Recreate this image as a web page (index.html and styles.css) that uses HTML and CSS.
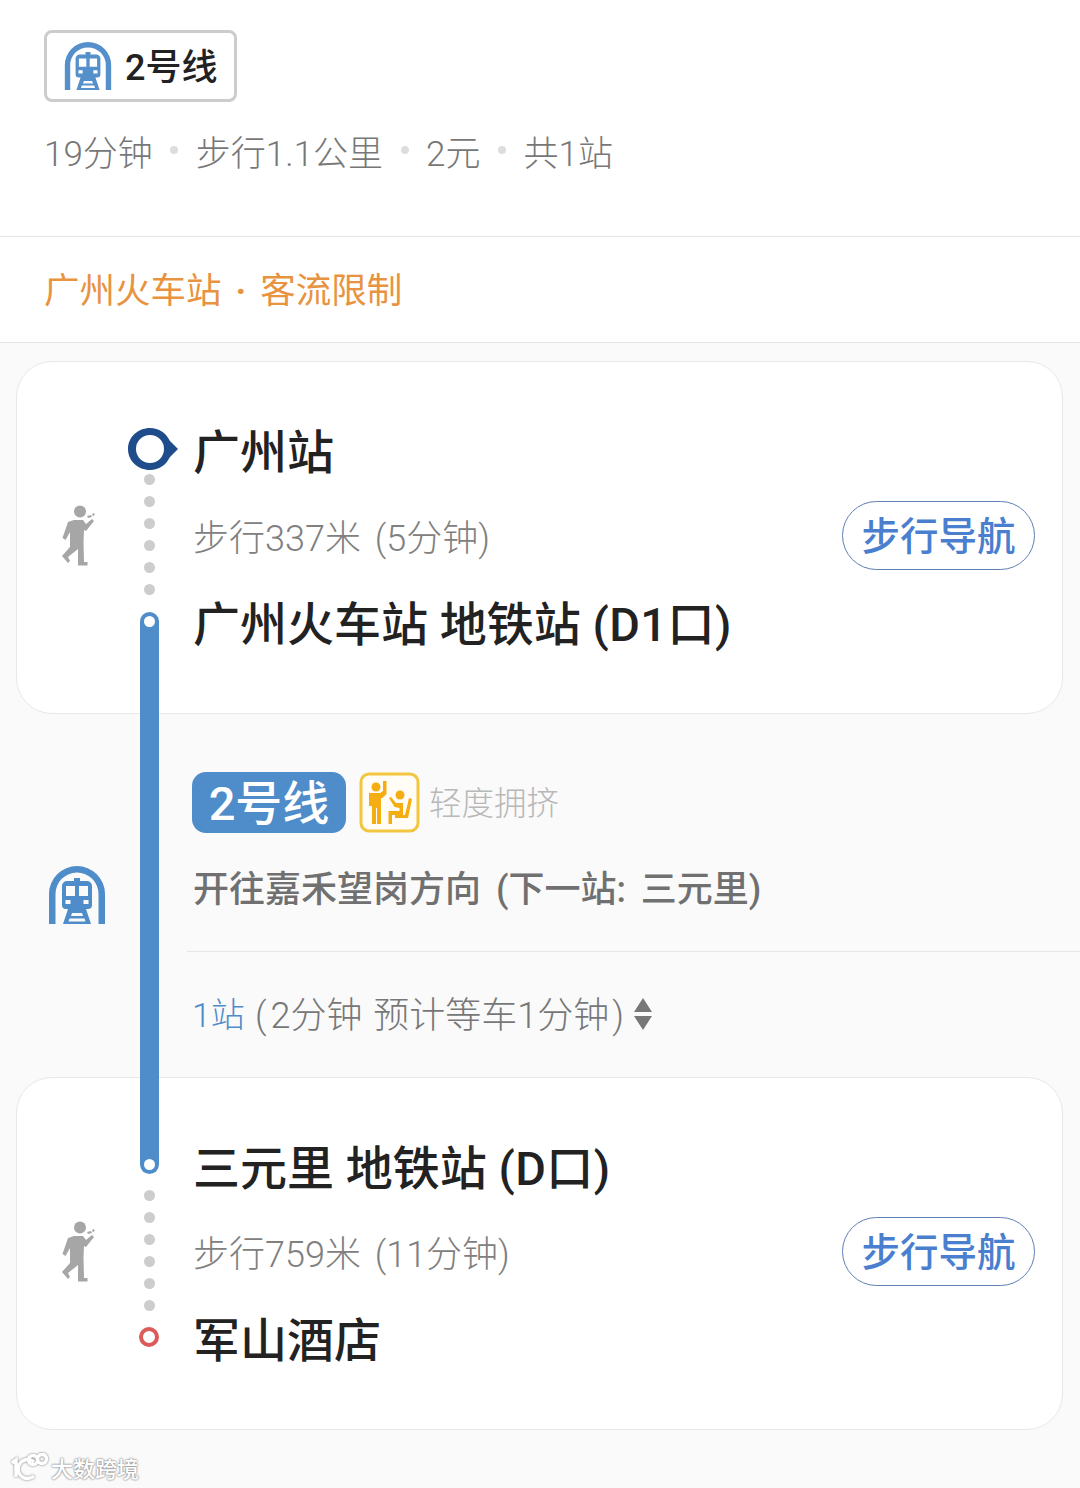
FILE: index.html
```html
<!doctype html>
<html lang="zh-CN">
    <head>
        <meta charset="utf-8">
        <title>2号线</title>
        <link rel="stylesheet" href="styles.css">
    </head>
    <body>
        <svg class="defs" width="0" height="0">
            <symbol id="subway" viewBox="0 0 56 58">
                <path d="M0 58V28a28 28 0 0 1 56 0V58H49.500V28a21.500 21.500 0 0 0-43 0V58Z"/>
                <path fill-rule="evenodd" d="M25 12h6v3h7a5 5 0 0 1 5 5v19a4 4 0 0 1-4 4h-2l5 15H14l5-15h-2a4 4 0 0 1-4-4V20a5 5 0 0 1 5-5h7ZM17 20v10h9V20ZM30 20v10h9V20ZM16.500 34v4h5v-4ZM34.500 34v4h5v-4ZM23 47l-1 3h12l-1-3ZM20.500 52.500l-1 3h17l-1-3Z"/>
            </symbol>
            <symbol id="walker" viewBox="0 0 36 64">
                <circle cx="20" cy="6.500" r="6"/>
                <path d="M8 17l6-2h9l3 4 6-5 2 2-8 10-2-1-.500 12 .500 20h3.500v3.500H18V44L8 52l2 4-2 2-6-7 8-9V27l-4.500 8-3-2Z"/>
                <path d="M27 11l4-1 1 2-4 1ZM32 9l2-1 .800 2-2 1Z"/>
            </symbol>
        </svg>
        <div class="page">
            <section class="summary">
                <div class="badge">
                    <svg class="badge-icon"><use href="#subway"/></svg>
                    <span class="badge-text">2号线</span>
                </div>
                <div class="facts">
                    <span>19分钟</span><i></i>
                    <span>步行1.1公里</span><i></i>
                    <span>2元</span><i></i>
                    <span>共1站</span>
                </div>
            </section>
            <section class="alert">广州火车站<span class="alert-dot">·</span>客流限制</section>

            <section class="route">
                <div class="line"></div>

                <div class="card">
                    <svg class="walker"><use href="#walker"/></svg>
                    <div class="rail">
                        <svg class="start" viewBox="0 0 50 42"><path fill-rule="evenodd" fill="#1f4c8a" d="M22 0c9 0 16 5 20 13l8 8-8 8c-4 8-11 13-20 13C10 42 0 33 0 21S10 0 22 0ZM22 7a14 14 0 1 0 0 28 14 14 0 0 0 0-28Z"/></svg>
                        <div class="dots"><b></b><b></b><b></b><b></b><b></b><b></b></div>
                    </div>
                    <div class="stops">
                        <div class="stop">广州站</div>
                        <div class="walk">
                            <span>步行337米 (5分钟)</span>
                            <a class="nav">步行导航</a>
                        </div>
                        <div class="stop">广州火车站 地铁站 <span class="exit">(D1口)</span></div>
                    </div>
                </div>

                <div class="transit">
                    <div class="transit-side">
                        <svg class="subway"><use href="#subway"/></svg>
                    </div>
                    <div class="transit-main">
                        <div class="line-row">
                            <span class="line-tag">2号线</span>
                            <svg class="crowd" viewBox="0 0 61 61">
                                <rect x="2" y="2" width="57" height="57" rx="8" fill="#fffdf6" stroke="#f3c63f" stroke-width="3"/>
                                <g fill="#f5ad14">
                                    <circle cx="17" cy="15" r="4.500"/>
                                    <path d="M10 21h11l3-2V9h3.500v13l-4 4H22v26h-4V36h-1v16h-4V34h-3Z"/>
                                    <circle cx="41" cy="23" r="4.500"/>
                                    <path d="M30 26l2-1 5 6h7v12H33v9h-3.500V39h11v-3l-5-1ZM50 26l3 1-4 19H36v-3h10Z"/>
                                </g>
                            </svg>
                            <span class="crowd-text">轻度拥挤</span>
                        </div>
                        <div class="direction">开往嘉禾望岗方向 (下一站: 三元里)</div>
                        <div class="count">
                            <span class="count-num">1站</span>
                            <span class="count-text"><span class="paren-open">(</span>2分钟 预计等车1分钟<span class="paren-close">)</span></span>
                            <svg class="updown" viewBox="0 0 18 32"><path d="M9 0l9 14H0ZM0 18h18L9 32Z"/></svg>
                        </div>
                    </div>
                </div>

                <div class="card">
                    <svg class="walker"><use href="#walker"/></svg>
                    <div class="rail rail-end">
                        <div class="dots"><b></b><b></b><b></b><b></b><b></b><b></b></div>
                        <div class="end"></div>
                    </div>
                    <div class="stops">
                        <div class="stop">三元里 地铁站 <span class="exit">(D口)</span></div>
                        <div class="walk">
                            <span>步行759米 (11分钟)</span>
                            <a class="nav">步行导航</a>
                        </div>
                        <div class="stop">军山酒店</div>
                    </div>
                </div>
            </section>

            <div class="mark">
                <svg class="mark-logo" viewBox="0 0 42 28">
                    <path d="M3 10l4-3v17M25 9a9.500 9.500 0 1 0 0 14"/>
                    <circle cx="24" cy="7" r="4.500"/>
                    <circle cx="33" cy="6" r="4.500"/>
                </svg>
                <span>大数跨境</span>
            </div>
        </div>
    </body>
</html>
```

FILE: styles.css
```css
* {
    margin: 0;
    padding: 0;
    box-sizing: border-box;
}
html, body {
    background: #fafafa;
}
.defs {
    position: absolute;
}
.page {
    position: relative;
    height: 1488px;
    overflow: hidden;
    font-family: Roboto, "Noto Sans CJK SC", sans-serif;
    color: #222;
}

/* top summary */
.summary {
    height: 237px;
    padding: 30px 0 0 44px;
    background: #fff;
    border-bottom: 1px solid #e6e6e6;
}
.badge {
    display: flex;
    align-items: center;
    width: 193px;
    height: 72px;
    padding-left: 17px;
    border: 3px solid #ccc;
    border-radius: 8px;
    font-size: 36px;
    font-weight: 500;
}
.badge-icon {
    width: 48px;
    height: 48px;
    margin-right: 13px;
    fill: #5590cb;
}
.badge-text {
    margin-bottom: 4px;
}
.facts {
    display: flex;
    align-items: center;
    gap: 17.500px;
    height: 50px;
    margin-top: 25px;
    padding-bottom: 4px;
    font-size: 35px;
    font-weight: 300;
    color: #777;
}
.facts i {
    width: 8px;
    height: 8px;
    border-radius: 50%;
    background: #ddd;
}
.alert {
    height: 106px;
    padding: 31px 0 0 44px;
    background: #fff;
    border-bottom: 1px solid #e6e6e6;
    font-size: 35.500px;
    line-height: 46px;
    color: #e8933f;
}
.alert-dot {
    margin: 0 14px;
    font-weight: 700;
}

/* route */
.route {
    position: relative;
    padding-top: 18px;
}
.line {
    position: absolute;
    z-index: 2;
    left: 140px;
    top: 269px;
    width: 19px;
    height: 562px;
    border-radius: 10px;
    background: #4f8dca;
}
.line::before, .line::after {
    content: "";
    position: absolute;
    left: 4px;
    width: 11px;
    height: 11px;
    border-radius: 50%;
    background: #fff;
}
.line::before {
    top: 4px;
}
.line::after {
    bottom: 4px;
}
.card {
    display: flex;
    height: 353px;
    margin: 0 17px 0 16px;
    background: #fff;
    border: 1px solid #e8e8e8;
    border-radius: 36px;
}
.walker {
    flex: none;
    width: 36px;
    height: 64px;
    margin: 143px 25px 0 43px;
    fill: #a6a6a6;
}
.rail {
    flex: none;
    display: flex;
    flex-direction: column;
    align-items: center;
    width: 56px;
    padding-top: 66px;
}
.rail-end {
    padding-top: 112px;
}
.start {
    width: 50px;
    height: 42px;
    margin: 0 -4px 4px 4px;
    filter: blur(0.4px);
}
.dots {
    display: flex;
    flex-direction: column;
    gap: 12px;
}
.dots b {
    width: 11px;
    height: 11px;
    margin-bottom: -1px;
    border-radius: 50%;
    background: #cdcdcd;
}
.end {
    width: 20px;
    height: 20px;
    margin-top: 17px;
    border: 4px solid #dc5a5a;
    border-radius: 50%;
}
.stops {
    flex: 1;
    padding: 47px 27px 0 16px;
}
.stop {
    height: 86px;
    font-size: 47px;
    font-weight: 500;
    line-height: 87px;
}
.exit {
    letter-spacing: 0.500px;
}
.walk {
    display: flex;
    align-items: center;
    justify-content: space-between;
    height: 86px;
    padding-bottom: 6px;
    font-size: 36px;
    font-weight: 300;
    word-spacing: 5px;
    color: #808080;
}
.nav {
    width: 193px;
    height: 69px;
    border: 1px solid #5f7fb5;
    border-radius: 35px;
    font-size: 38.500px;
    font-weight: 500;
    line-height: 70px;
    text-align: center;
    color: #4a7fd0;
}

/* transit part */
.transit {
    display: flex;
    height: 363px;
}
.transit-side {
    flex: none;
    width: 187px;
    padding: 152px 0 0 49px;
}
.subway {
    width: 56px;
    height: 58px;
    fill: #4f8dca;
}
.transit-main {
    flex: 1;
    padding-top: 58px;
}
.line-row {
    display: flex;
    align-items: center;
    height: 61px;
    padding-left: 5px;
}
.line-tag {
    width: 154px;
    height: 61px;
    border-radius: 14px;
    background: #4f8dca;
    font-size: 47px;
    font-weight: 500;
    line-height: 64px;
    text-align: center;
    color: #fff;
}
.crowd {
    width: 61px;
    height: 61px;
    margin: 0 9px 0 13px;
}
.crowd-text {
    margin-bottom: 4px;
    font-size: 32.500px;
    font-weight: 300;
    color: #b8b8b8;
}
.direction {
    height: 83px;
    margin-top: 36px;
    padding: 0 0 41px 6px;
    border-bottom: 1px solid #e6e6e6;
    font-size: 36px;
    font-weight: 500;
    word-spacing: 6px;
    line-height: 42px;
    color: #707070;
}
.count {
    display: flex;
    align-items: center;
    height: 40px;
    margin-top: 42px;
    padding-left: 5px;
    font-size: 36px;
    font-weight: 300;
    word-spacing: 2px;
    color: #777;
}
.count-num {
    width: 63px;
    padding-bottom: 4px;
    font-size: 34px;
    color: #4f8dca;
}
.count-text {
    padding-bottom: 4px;
}
.paren-open {
    margin-right: 4px;
}
.paren-close {
    margin-left: 3px;
}
.updown {
    width: 18px;
    height: 32px;
    margin-left: 10px;
    fill: #777;
}

/* watermark */
.mark {
    position: absolute;
    left: 9px;
    top: 1451px;
    display: flex;
    align-items: center;
    font-family: "Noto Sans CJK SC", sans-serif;
    font-size: 22px;
    font-weight: 500;
    color: #fff;
    text-shadow: 0 0 2px #888, 0 0 2px #888;
}
.mark-logo {
    width: 42px;
    height: 28px;
    fill: none;
    stroke: #fff;
    stroke-width: 3.500;
    filter: drop-shadow(0 0 1px #777);
}
```
